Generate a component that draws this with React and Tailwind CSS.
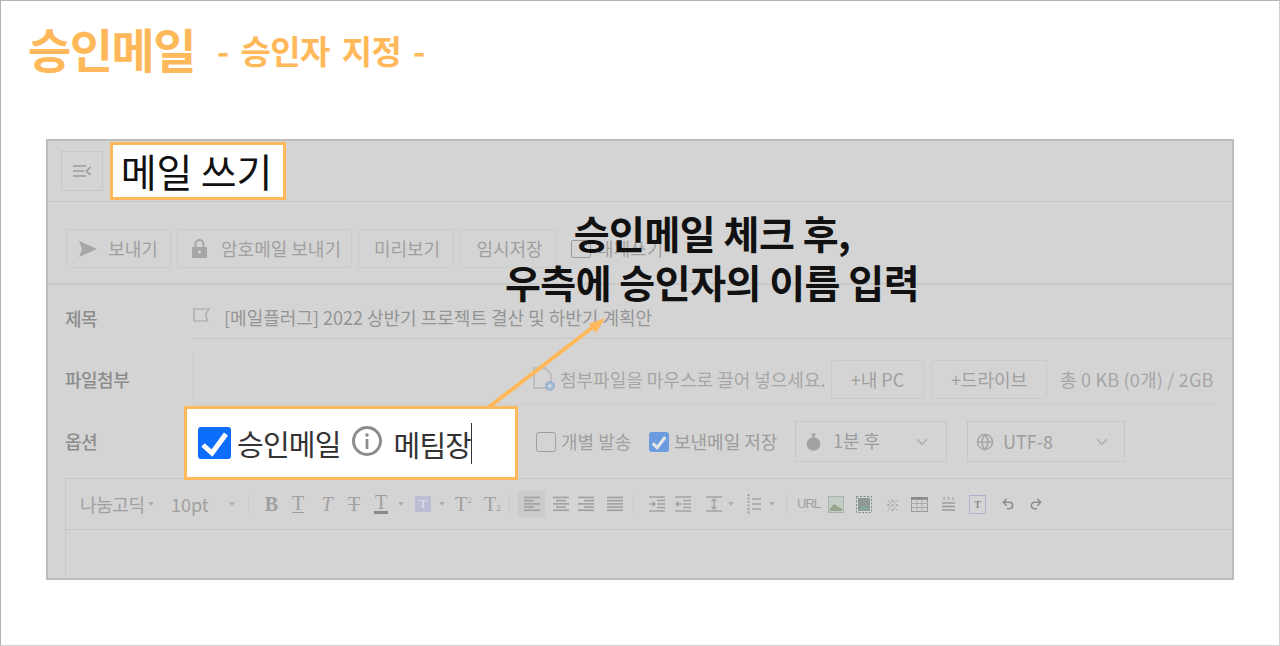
import React from "react";
import { ChevronDown, Undo2, Redo2, Globe } from "lucide-react";

const font = { fontFamily: '"Noto Sans CJK KR", "Noto Sans", sans-serif' };
const serif = { fontFamily: '"Liberation Serif", serif' };

function Btn({ className = "", children }) {
  return (
    <div className={"h-[39px] shrink-0 flex items-center justify-center border border-[#cacaca] rounded-[2px] text-[18px] text-[#a0a0a0] " + className}>
      {children}
    </div>
  );
}

function Lines({ kind = "left" }) {
  const rows = [0, 3.2, 6.4, 9.6, 12.8];
  const w = { left: [16, 10, 16, 10, 16], center: [16, 10, 16, 10, 16], right: [16, 10, 16, 10, 16], full: [16, 16, 16, 16, 16] }[kind];
  return (
    <svg width="16" height="16" viewBox="0 0 16 16" className="shrink-0 block">
      {rows.map((y, i) => {
        const x = kind === "center" ? (16 - w[i]) / 2 : kind === "right" ? 16 - w[i] : 0;
        return <rect key={y} x={x} y={y + 0.6} width={w[i]} height="1.7" fill="#a2a2a2" />;
      })}
    </svg>
  );
}

function Caret({ className = "" }) {
  return <span className={"block shrink-0 w-0 h-0 border-x-[3px] border-x-transparent border-t-[4px] border-t-[#b0b0b0] " + className} />;
}

function Sep({ className = "" }) {
  return <span className={"block shrink-0 w-px h-[22px] bg-[#cacaca] " + className} />;
}

function SerifT({ className = "", children, underline, bar, strike }) {
  return (
    <span className={"relative shrink-0 flex flex-col items-center text-[20px] leading-[17px] text-[#a0a0a0] " + className} style={serif}>
      {children}
      {underline && <span className="w-[12px] h-[1.5px] bg-[#a0a0a0]" />}
      {bar && <span className="w-[14px] h-[3px] bg-[#8a8a8a]" />}
      {strike && <span className="absolute left-0 top-[8px] w-[12px] h-[1.5px] bg-[#a0a0a0]" />}
    </span>
  );
}

function Toolbar() {
  return (
    <div className="h-[51px] shrink-0 flex items-center border-b border-[#c4c4c4] text-[#a0a0a0] pl-[14px] whitespace-nowrap">
      <span className="text-[18px] w-[68px] tracking-[-0.4px]">나눔고딕</span>
      <Caret />
      <span className="text-[18px] w-[58px] ml-[17px]">10pt</span>
      <Caret />
      <Sep className="ml-[13px]" />
      <SerifT className="font-bold w-[13px] ml-[16px]">B</SerifT>
      <SerifT underline className="w-[12px] ml-[14px]">T</SerifT>
      <SerifT className="italic w-[14px] ml-[16px]">T</SerifT>
      <SerifT strike className="w-[12px] ml-[14px]">T</SerifT>
      <SerifT bar className="w-[14px] ml-[14px]">T</SerifT>
      <Caret className="ml-[10px]" />
      <span className="block shrink-0 ml-[11px] w-[16px] h-[16px] bg-[#bcbcd4] text-[#e4e4ee] text-[13px] leading-[16px] text-center" style={serif}>T</span>
      <Caret className="ml-[8px]" />
      <span className="shrink-0 flex ml-[10px] w-[18px] text-[20px] leading-[17px] text-[#a0a0a0]" style={serif}>T<span className="text-[9px] leading-[9px]">2</span></span>
      <span className="shrink-0 flex items-end ml-[11px] w-[17px] text-[20px] leading-[17px] text-[#a0a0a0]" style={serif}>T<span className="text-[9px] leading-[9px]">2</span></span>
      <Sep className="ml-[8px]" />
      <div className="ml-[8px] w-[27px] h-[26px] shrink-0 bg-[#cbcbcb] flex items-center justify-center"><Lines kind="left" /></div>
      <span className="ml-[8px]"><Lines kind="center" /></span>
      <span className="ml-[9px]"><Lines kind="right" /></span>
      <span className="ml-[13px]"><Lines kind="full" /></span>
      <Sep className="ml-[10px]" />
      <svg width="16" height="16" viewBox="0 0 16 16" className="ml-[15px] shrink-0"><path d="M0 1h16M8 4.5h8M8 8h8M8 11.5h8M0 15h16M0 8h6M3.5 5.5L6 8l-2.5 2.5" stroke="#a2a2a2" strokeWidth="1.4" fill="none" /></svg>
      <svg width="16" height="16" viewBox="0 0 16 16" className="ml-[10px] shrink-0"><path d="M0 1h16M8 4.5h8M8 8h8M8 11.5h8M0 15h16M1 8h6M3.5 5.5L1 8l2.5 2.5" stroke="#a2a2a2" strokeWidth="1.4" fill="none" /></svg>
      <svg width="16" height="16" viewBox="0 0 16 16" className="ml-[15px] shrink-0"><path d="M0 1h16M0 15h16M8 3v10M5.5 5.5L8 3l2.5 2.5M5.5 10.5L8 13l2.5-2.5" stroke="#a2a2a2" strokeWidth="1.5" fill="none" /></svg>
      <Caret className="ml-[6px]" />
      <svg width="14" height="20" viewBox="0 0 14 20" className="ml-[13px] shrink-0"><path d="M5 5h9M5 10h9M5 15h9" stroke="#a2a2a2" strokeWidth="1.5" /><path d="M1.5 0v20" stroke="#a2a2a2" strokeWidth="2" strokeDasharray="2 1.5" /></svg>
      <Caret className="ml-[8px]" />
      <Sep className="ml-[11px] h-[16px]" />
      <span className="block shrink-0 ml-[10px] w-[21px] text-[13px] tracking-[-1px] text-[#a0a0a0]" style={{ fontFamily: '"Liberation Sans", sans-serif' }}>URL</span>
      <svg width="16" height="17" viewBox="0 0 16 17" className="ml-[10px] shrink-0"><rect x="0.5" y="0.5" width="15" height="16" fill="#c4ccc6" stroke="#aab4ae" /><path d="M2 13l4-5 8 5v2H2z" fill="#94a48e" /></svg>
      <svg width="16" height="17" viewBox="0 0 16 17" className="ml-[12px] shrink-0"><rect x="2" y="2" width="12" height="13" fill="#8f9a96" /><rect x="0.5" y="0.5" width="15" height="16" fill="none" stroke="#7e8e8a" strokeDasharray="2 1.5" /><path d="M3 14l5-5 6 5z" fill="#86a898" /></svg>
      <span className="block shrink-0 ml-[13px] w-[13px] text-[15px] leading-none text-[#acacac]">※</span>
      <svg width="17" height="15" viewBox="0 0 17 15" className="ml-[13px] shrink-0"><rect x="0.5" y="0.5" width="16" height="14" fill="none" stroke="#9a9a9a" /><path d="M0 1.5h17" stroke="#8a8a8a" strokeWidth="2.5" /><path d="M0 6.5h17M0 10.5h17M6 3v12M11 3v12" stroke="#aaa" /></svg>
      <svg width="15" height="16" viewBox="0 0 15 16" className="ml-[13px] shrink-0"><path d="M3 1v3M7.5 1v3M12 1v3" stroke="#aaa" strokeWidth="1.5" /><path d="M1 7h13M1 10.5h13M1 14h13" stroke="#9a9a9a" strokeWidth="1.7" /></svg>
      <span className="block shrink-0 ml-[13px] w-[17px] h-[19px] border border-[#b0b0c8] text-[10px] leading-[17px] text-center text-[#8c8c8c] font-bold" style={serif}>T</span>
      <Undo2 size={14} className="ml-[15px] shrink-0 text-[#8c8c8c]" strokeWidth={2.6} />
      <Redo2 size={14} className="ml-[14px] shrink-0 text-[#8c8c8c]" strokeWidth={2.6} />
    </div>
  );
}

function Box({ className = "", children }) {
  return <div className={"h-[41px] shrink-0 border border-[#c6c6c6] flex items-center text-[#9c9c9c] text-[18px] " + className}>{children}</div>;
}

export default function App() {
  return (
    <div className="relative w-[1280px] h-[646px] bg-white border border-[#b4b4b4] border-r-[#d0d0d0] border-b-[#d0d0d0] overflow-hidden" style={font}>
      <div className="flex items-center h-[98px] pl-[27px] text-[#ffb95a] font-bold pb-[5px]">
        <span className="text-[47px] leading-none tracking-[-1.5px]">승인메일</span>
        <span className="text-[33px] leading-none ml-[22px] mt-[6px] tracking-[-0.6px] [word-spacing:5px]">- 승인자 지정 -</span>
      </div>

      <div className="ml-[45px] mt-[40px] w-[1188px] h-[441px] border-2 border-[#bcbcbc] bg-[#d4d4d4] flex flex-col">
        <div className="h-[61px] shrink-0 border-b border-[#c4c4c4] flex items-center pl-[13px] pb-[1px]">
          <div className="w-[42px] h-[40px] border border-[#c6c6c6] flex items-center justify-center">
            <svg width="18" height="12" viewBox="0 0 18 12"><path d="M0 1h13M0 6h11M0 11h13" stroke="#9a9a9a" strokeWidth="1.6" /><path d="M17.5 2L13.5 6l4 4" stroke="#9a9a9a" strokeWidth="1.6" fill="none" /></svg>
          </div>
        </div>

        <div className="h-[83px] shrink-0 border-b-2 border-[#cacaca] flex items-center pl-[18px] gap-[6px] pt-[12px] whitespace-nowrap">
          <Btn className="w-[105px] gap-[11px]">
            <svg width="18" height="18" viewBox="0 0 18 18"><path d="M0 1l18 8-18 8 3-8z" fill="#a6a6a6" /></svg>
            <span>보내기</span>
          </Btn>
          <Btn className="w-[175px] gap-[14px] pl-[4px]">
            <svg width="15" height="19" viewBox="0 0 15 19"><path d="M3.5 8V5a4 4 0 018 0v3" fill="none" stroke="#a6a6a6" strokeWidth="2" /><rect x="0" y="8" width="15" height="11" rx="1" fill="#a6a6a6" /><circle cx="7.5" cy="13" r="1.6" fill="#d4d4d4" /></svg>
            <span>암호메일 보내기</span>
          </Btn>
          <Btn className="w-[96px] pl-[2px]">미리보기</Btn>
          <Btn className="w-[97px] pl-[2px]">임시저장</Btn>
          <div className="ml-[8px] flex items-center text-[18px] text-[#a0a0a0] gap-[6px]">
            <span className="w-[20px] h-[18px] border border-[#9c9c9c] rounded-[2px]" />
            <span>내게쓰기</span>
          </div>
        </div>

        <div className="h-[54px] shrink-0 flex items-center pt-[12px] pl-[17px] text-[18px] text-[#8c8c8c]">
          <span className="w-[127px] font-medium tracking-[-0.5px]">제목</span>
          <div className="flex-1 h-full flex items-center border-b border-[#c6c6c6] pl-[1px]">
            <svg width="17" height="15" viewBox="0 0 17 15" className="mr-[14px] -mt-[4px]"><path d="M1 1h15l-3.5 5.5 2 6.5H1z" fill="none" stroke="#a6a6a6" strokeWidth="1.2" /></svg>
            <span className="text-[#949494] text-[18px] whitespace-nowrap">[메일플러그] 2022 상반기 프로젝트 결산 및 하반기 계획안</span>
          </div>
        </div>

        <div className="h-[66px] shrink-0 flex items-center pt-[15px] pl-[17px] text-[18px] text-[#8c8c8c]">
          <span className="w-[127px] font-medium tracking-[-0.5px] whitespace-nowrap">파일첨부</span>
          <div className="flex-1 h-full mr-[16px] border-l border-b border-[#cdcdcd] flex items-center pl-[339px] whitespace-nowrap">
            <svg width="24" height="26" viewBox="0 0 24 26" className="mr-[4px] shrink-0"><path d="M2 2h11l6 6v14H2z" fill="none" stroke="#b4b4b4" strokeWidth="1.3" /><circle cx="18" cy="20" r="5" fill="#9cb4d0" /><path d="M18 17.5v5M15.5 20h5" stroke="#e4e4e4" strokeWidth="1.2" /></svg>
            <span className="text-[#a6a6a6] text-[18px] w-[271px] shrink-0">첨부파일을 마우스로 끌어 넣으세요.</span>
            <Btn className="w-[93px] h-[38px] text-[18px]">+내 PC</Btn>
            <Btn className="w-[116px] h-[38px] ml-[7px]">+드라이브</Btn>
            <span className="ml-[13px] text-[18px] text-[#a6a6a6] tracking-[0.2px]">총 0 KB (0개) / 2GB</span>
          </div>
        </div>

        <div className="h-[73px] shrink-0 flex items-center pl-[17px] text-[18px] text-[#8c8c8c] whitespace-nowrap">
          <span className="w-[471px] shrink-0 font-medium tracking-[-0.5px]">옵션</span>
          <span className="w-[20px] h-[20px] shrink-0 border border-[#a0a0a0] rounded-[3px]" />
          <span className="ml-[5px] w-[88px] shrink-0 text-[#a0a0a0]">개별 발송</span>
          <span className="w-[20px] h-[20px] shrink-0 rounded-[3px] bg-[#6c9ce0] flex items-center justify-center">
            <svg width="20" height="20" viewBox="0 0 32 32"><path d="M6 18l7 7L26 8" fill="none" stroke="#e6e6e6" strokeWidth="5" /></svg>
          </span>
          <span className="ml-[5px] w-[121px] shrink-0 text-[#9c9c9c]">보낸메일 저장</span>
          <Box className="w-[152px] pl-[10px] pr-[15px]">
            <svg width="15" height="18" viewBox="0 0 15 18" className="mr-[12px]"><circle cx="7.5" cy="11" r="6.8" fill="#a2a2a2" /><rect x="5.5" y="0.5" width="4" height="2" fill="#a2a2a2" /><rect x="6.5" y="2" width="2" height="3" fill="#a2a2a2" /></svg>
            <span className="flex-1 -mt-[3px]">1분 후</span>
            <ChevronDown size={18} className="text-[#acacac]" />
          </Box>
          <Box className="w-[158px] ml-[20px] pl-[8px] pr-[13px]">
            <Globe size={18} className="mr-[9px] text-[#a6a6a6]" />
            <span className="flex-1">UTF-8</span>
            <ChevronDown size={18} className="text-[#acacac]" />
          </Box>
        </div>

        <div className="flex-1 ml-[17px] border-l border-t border-[#c6c6c6] flex flex-col">
          <Toolbar />
        </div>
      </div>

      {/* overlays */}
      <svg className="absolute left-[480px] top-[310px]" width="130" height="100" viewBox="0 0 130 100">
        <path d="M8 96L116 13" stroke="#ffb95a" strokeWidth="4" />
        <path d="M124 7L108 13l7 9z" fill="#ffb95a" />
      </svg>

      <div className="absolute left-[109px] top-[141px] w-[176px] h-[58px] bg-white border-[3px] border-[#ffb95a] flex items-center justify-center text-[#111] text-[39px] leading-none tracking-[-0.2px] whitespace-nowrap pb-[1px] pr-[3px]">
        메일 쓰기
      </div>

      <div className="absolute left-[183px] top-[405px] w-[334px] h-[74px] bg-white border-[3px] border-[#ffb95a] flex items-center text-[#333] text-[29px] leading-none pl-[11px]">
        <span className="w-[33px] h-[32px] rounded-[3px] bg-[#0d6efd] flex items-center justify-center shrink-0 -mt-[1px]">
          <svg width="33" height="32" viewBox="0 0 33 32"><path d="M5 18l9 8L28 7" fill="none" stroke="#fff" strokeWidth="5" /></svg>
        </span>
        <span className="ml-[6px] tracking-[-0.8px] whitespace-nowrap">승인메일</span>
        <svg width="32" height="32" viewBox="0 0 32 32" className="ml-[10px] shrink-0 -mt-[4px]">
          <circle cx="16" cy="16" r="13.5" fill="none" stroke="#8c8c8c" strokeWidth="3" />
          <rect x="14.6" y="14" width="2.8" height="10" fill="#8c8c8c" />
          <circle cx="16" cy="10" r="1.8" fill="#8c8c8c" />
        </svg>
        <span className="ml-[11px] tracking-[-0.8px] whitespace-nowrap mt-[2px]">메팀장</span>
        <span className="w-px h-[41px] bg-[#333] shrink-0" />
      </div>

      <div className="absolute left-[411px] top-[207px] w-[600px] text-center text-[39px] leading-[49px] font-bold text-[#111] tracking-[-0.5px]">
        <div>승인메일 체크 후,</div>
        <div>우측에 승인자의 이름 입력</div>
      </div>
    </div>
  );
}
